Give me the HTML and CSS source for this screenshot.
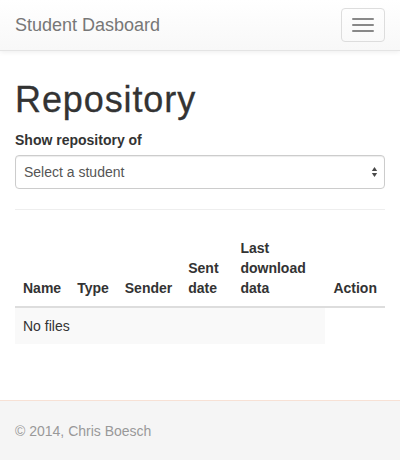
FILE: index.html
```html
<!DOCTYPE html>
<html lang="en">
<head>
<meta charset="utf-8">
<title>Student Dasboard</title>
<link rel="stylesheet" href="styles.css">
</head>
<body>
<nav class="navbar">
  <a class="brand" href="#">Student Dasboard</a>
  <button class="toggle" type="button" aria-label="Toggle navigation">
    <span class="bar"></span>
    <span class="bar"></span>
    <span class="bar"></span>
  </button>
</nav>
<main class="container">
  <h1 class="title">Repository</h1>
  <div class="form-group">
    <label class="label" for="student">Show repository of</label>
    <div class="select-wrap">
      <select id="student" class="select">
        <option>Select a student</option>
      </select>
      <svg class="select-arrows" width="7" height="12" viewBox="0 0 7 12" aria-hidden="true">
        <path d="M3.5 1 L6.2 5 L0.8 5 Z" fill="#4a4a4a"/>
        <path d="M3.5 11 L6.2 7 L0.8 7 Z" fill="#4a4a4a"/>
      </svg>
    </div>
  </div>
  <hr class="divider">
  <table class="table">
    <thead>
      <tr>
        <th>Name</th>
        <th>Type</th>
        <th>Sender</th>
        <th>Sent date</th>
        <th>Last download data</th>
        <th>Action</th>
      </tr>
    </thead>
    <tbody>
      <tr>
        <td class="empty" colspan="5">No files</td>
      </tr>
    </tbody>
  </table>
</main>
<footer class="footer">
  <p class="copy">© 2014, Chris Boesch</p>
</footer>
</body>
</html>
```
FILE: styles.css
```css
* { box-sizing: border-box; }
html, body { margin: 0; padding: 0; }
body {
  font-family: "Liberation Sans", Arial, Helvetica, sans-serif;
  font-size: 14px;
  line-height: 20px;
  color: #333;
  background: #fff;
}
.navbar {
  display: flex;
  align-items: flex-start;
  justify-content: space-between;
  height: 51px;
  background: linear-gradient(to bottom, #ffffff 0%, #f8f8f8 100%);
  border-bottom: 1px solid #e4e4e4;
  box-shadow: 0 1px 5px rgba(0,0,0,0.075);
}
.brand {
  padding: 15px;
  font-size: 18px;
  line-height: 20px;
  color: #777;
  text-decoration: none;
}
.toggle {
  margin: 8px 15px 0 0;
  padding: 9px 10px;
  width: 44px;
  height: 34px;
  background: transparent;
  border: 1px solid #ddd;
  border-radius: 4px;
  display: flex;
  flex-direction: column;
  gap: 4px;
}
.bar {
  display: block;
  width: 22px;
  height: 2px;
  background: #888;
  border-radius: 1px;
}
.container {
  padding: 0 15px;
}
.title {
  margin: 29px 0 10px;
  font-size: 36px;
  line-height: 1.1;
  font-weight: 500;
  letter-spacing: 0.9px;
  color: #333;
  -webkit-text-stroke: 0.3px #333;
}
.form-group {
  margin-bottom: 15px;
}
.label {
  display: block;
  margin-bottom: 5px;
  font-weight: bold;
}
.select-wrap {
  position: relative;
}
.select {
  display: block;
  width: 100%;
  height: 34px;
  padding: 6px 12px 6px 8px;
  font-family: inherit;
  font-size: 14px;
  color: #555;
  background: #fff;
  border: 1px solid #ccc;
  border-radius: 4px;
  box-shadow: inset 0 1px 1px rgba(0,0,0,0.075);
  appearance: none;
  -webkit-appearance: none;
}
.select-arrows {
  position: absolute;
  right: 7px;
  top: 11px;
  pointer-events: none;
}
.divider {
  margin: 20px 0;
  border: 0;
  border-top: 1px solid #eee;
}
.table {
  width: 100%;
  border-collapse: collapse;
  border-spacing: 0;
  margin-bottom: 20px;
}
.table th {
  padding: 8px;
  text-align: left;
  vertical-align: bottom;
  font-weight: bold;
  line-height: 20px;
  border-bottom: 2px solid #ddd;
}
.table td {
  padding: 8px;
  line-height: 20px;
  vertical-align: top;
}
.table .empty {
  background: #f9f9f9;
}
.footer {
  margin-top: 56px;
  padding: 20px 15px 19px;
  background: #f5f5f5;
  border-top: 1px solid #f7e1d5;
}
.copy {
  margin: 0;
  color: #999;
}
```
